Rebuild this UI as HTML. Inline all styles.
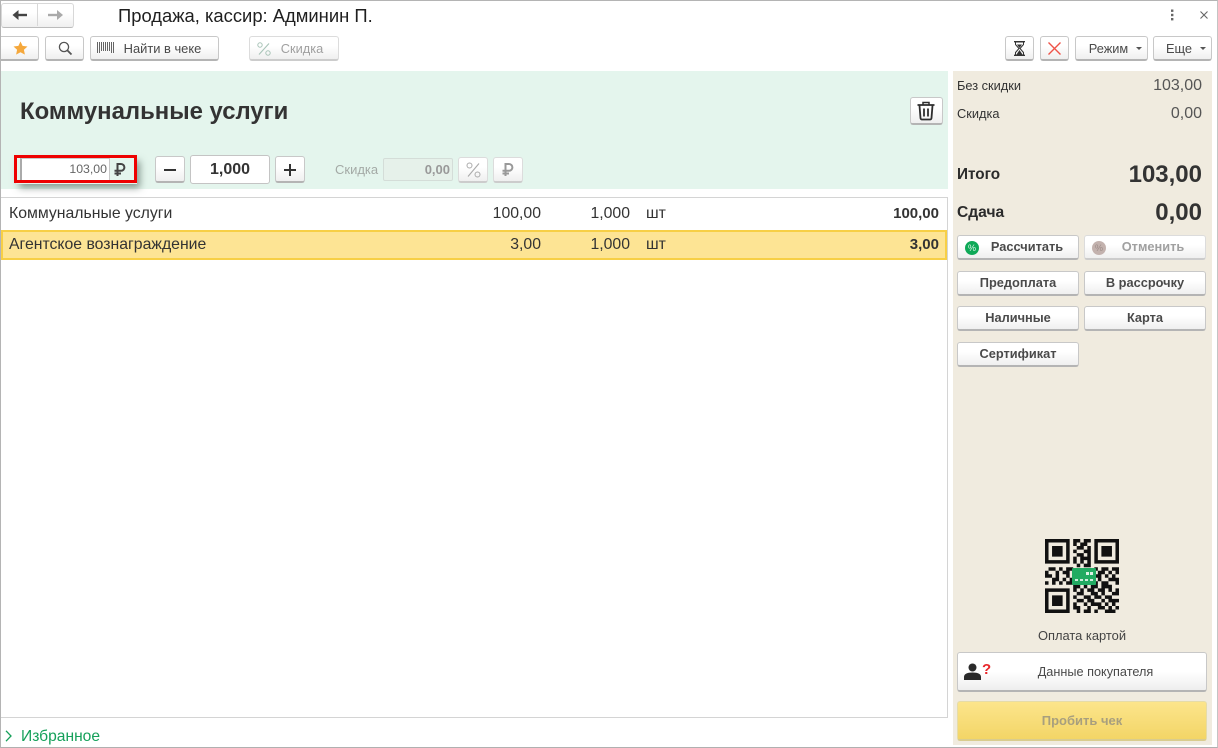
<!DOCTYPE html>
<html lang="ru">
<head>
<meta charset="utf-8">
<title>Продажа</title>
<style>
html,body{margin:0;padding:0;background:#fff}
body{width:1218px;height:748px;position:relative;overflow:hidden;font-family:"Liberation Sans",sans-serif;color:#333}
.a{position:absolute;white-space:nowrap}
.btn{position:absolute;box-sizing:border-box;border:1px solid #c8c8c8;border-bottom:2px solid #b4b4b4;border-radius:3px;background:linear-gradient(#fff 40%,#efefef);text-align:center;font-size:12.8px;color:#4a4a4a;white-space:nowrap}
.dis{border-color:#dcdcdc;border-bottom-color:#cccccc;color:#a0a0a0}
.pay{font-weight:bold;font-size:12.8px;height:25px;line-height:22px;width:122px}
.n{position:absolute;text-align:right;white-space:nowrap}
.t{font-size:15.8px;line-height:18px}
svg{position:absolute;overflow:visible}
</style>
</head>
<body>
<!-- window frame -->
<div class="a" style="left:0;top:0;width:1218px;height:748px;box-sizing:border-box;border:1px solid #b4b4b4;border-right-color:#c4c4c4;border-bottom-color:#b0b0b0;z-index:20;pointer-events:none"></div>

<!-- top nav -->
<div class="btn" style="left:1px;top:3px;width:73px;height:25px;border-bottom-width:1px;border-color:#d8d8d8;border-bottom-color:#bbb"></div>
<div class="a" style="left:37px;top:4px;width:1px;height:22px;background:#d8d8d8"></div>
<svg style="left:12px;top:10px" width="16" height="10" viewBox="0 0 16 10"><path d="M15 5H4" stroke="#444" stroke-width="2.4"/><path d="M6.5 0L0.5 5l6 5z" fill="#444"/></svg>
<svg style="left:48px;top:10px" width="16" height="10" viewBox="0 0 16 10"><path d="M0 5h11" stroke="#aaa" stroke-width="2.4"/><path d="M9 0l6 5-6 5z" fill="#aaa"/></svg>
<div class="a" style="left:118px;top:5px;font-size:18.4px;line-height:22px;color:#1f1f1f">Продажа, кассир: Админин П.</div>

<svg style="left:1170px;top:9px" width="5" height="12" viewBox="0 0 5 12"><g fill="#666"><rect x="1" y="0.5" width="2.4" height="2.4"/><rect x="1" y="4.8" width="2.4" height="2.4"/><rect x="1" y="9" width="2.4" height="2.4"/></g></svg>
<svg style="left:1199px;top:10px" width="10" height="10" viewBox="0 0 10 10"><path d="M1.5 1.5l7 7M8.5 1.5l-7 7" stroke="#666" stroke-width="1.1"/></svg>

<!-- toolbar -->
<div class="btn" style="left:-2px;top:36px;width:41px;height:25px"></div>
<svg style="left:13px;top:41px" width="15" height="14" viewBox="0 0 15 14"><path d="M7.5 0.5l2.1 4.4 4.9.6-3.6 3.3 1 4.8-4.4-2.4-4.4 2.4 1-4.8L0.5 5.5l4.9-.6z" fill="#f5a83c"/></svg>
<div class="btn" style="left:45px;top:36px;width:39px;height:25px"></div>
<svg style="left:58px;top:41px" width="15" height="15" viewBox="0 0 15 15"><circle cx="6" cy="6" r="4.6" fill="none" stroke="#555" stroke-width="1.3"/><path d="M9.5 9.5l4 4" stroke="#555" stroke-width="1.8"/></svg>
<div class="btn" style="left:90px;top:36px;width:129px;height:25px;line-height:23px;padding-left:16px;font-size:12.9px">Найти в чеке</div>
<svg style="left:97px;top:42px" width="17" height="11" viewBox="0 0 17 11"><path d="M.5 0v11M2.5 0v11M4.5 0v9M6.5 0v9M8.5 0v9M10.5 0v9M12.5 0v9M14.5 0v11M16.5 0v11" stroke="#666" stroke-width="1"/></svg>
<div class="btn dis" style="left:249px;top:36px;width:90px;height:25px;line-height:23px;padding-left:16px;font-size:12.8px">Скидка</div>
<svg style="left:257px;top:42px" width="14" height="14" viewBox="0 0 14 14"><path d="M12 1.5L2 12.5" stroke="#a9c4b8" stroke-width="1.1"/><circle cx="3" cy="3" r="2.2" fill="none" stroke="#a9c4b8"/><circle cx="11" cy="11" r="2.2" fill="none" stroke="#a9c4b8"/></svg>

<div class="btn" style="left:1005px;top:36px;width:29px;height:25px"></div>
<svg style="left:1013px;top:41px" width="13" height="15" viewBox="0 0 13 15"><path d="M1 .7h11M1 14.3h11" stroke="#333" stroke-width="1.4"/><path d="M2.5 1v2.5L6 7.5 2.5 11.5V14h8v-2.500L7 7.500l3.500-4V1z" fill="none" stroke="#333" stroke-width="1"/><path d="M3.500 13.500L6.500 9l3 4.500zM4 3.500h5L6.500 7z" fill="#333"/></svg>
<div class="btn" style="left:1040px;top:36px;width:29px;height:25px"></div>
<svg style="left:1047px;top:41px" width="15" height="15" viewBox="0 0 15 15"><path d="M1.500 1.500l12 12M13.500 1.500l-12 12" stroke="#ef5348" stroke-width="1.400"/></svg>
<div class="btn" style="left:1075px;top:36px;width:73px;height:25px;line-height:23px;padding-right:6px;text-align:center">Режим</div>
<div class="a" style="left:1136px;top:47px;border:3px solid transparent;border-top:3px solid #555;border-bottom:0"></div>
<div class="btn" style="left:1153px;top:36px;width:59px;height:25px;line-height:23px;padding-right:7px">Еще</div>
<div class="a" style="left:1200px;top:47px;border:3px solid transparent;border-top:3px solid #555;border-bottom:0"></div>

<!-- green header -->
<div class="a" style="left:1px;top:71px;width:947px;height:118px;background:#e4f5ed"></div>
<div class="a" style="left:20px;top:97px;font-size:23.900px;line-height:29px;font-weight:bold;color:#333">Коммунальные услуги</div>
<div class="btn" style="left:910px;top:97px;width:33px;height:28px"></div>
<svg style="left:916px;top:101px" width="20" height="20" viewBox="0 0 20 20"><path d="M1.500 4h17" stroke="#2e2e2e" stroke-width="1.800"/><path d="M7 3.500V1.500h6v2" fill="none" stroke="#2e2e2e" stroke-width="1.500"/><path d="M3.500 4.500l1 12.500a1.500 1.500 0 0 0 1.500 1.500h8a1.500 1.500 0 0 0 1.500-1.500l1-12.500" fill="none" stroke="#2e2e2e" stroke-width="1.800"/><path d="M8 7.500v8M12 7.500v8" stroke="#2e2e2e" stroke-width="1.800"/></svg>

<!-- price field with red box -->
<div class="a" style="left:16px;top:157px;width:121px;height:27px;box-shadow:3px 4px 7px rgba(60,80,70,.55)"></div>
<div class="a" style="left:20px;top:158px;width:90px;height:24px;box-sizing:border-box;background:#fff;border:1px solid #c8c8c8;border-left:2px solid #aaa"></div>
<div class="a" style="left:110px;top:158px;width:24px;height:24px;background:#e4f5ed"></div>
<div class="n" style="left:20px;width:87px;top:162px;font-size:12.300px;line-height:15px;color:#666">103,00</div>
<svg style="left:114px;top:163px" width="11" height="13" viewBox="0 0 11 13"><path d="M3.500 13V1H7a3.200 3.200 0 0 1 0 6.800H0.500M0.500 10.500H7" fill="none" stroke="#444" stroke-width="2"/></svg>
<div class="a" style="left:14px;top:155px;width:123px;height:28px;box-sizing:border-box;border:3px solid #ee0000"></div>

<!-- qty -->
<div class="btn" style="left:155px;top:156px;width:30px;height:27px"></div>
<div class="a" style="left:164px;top:169px;width:12px;height:2px;background:#333"></div>
<div class="a" style="left:190px;top:155px;width:80px;height:29px;box-sizing:border-box;background:#fff;border:1px solid #c4c4c4;border-radius:3px;text-align:center;font-size:16px;line-height:27px;font-weight:bold;color:#333">1,000</div>
<div class="btn" style="left:275px;top:156px;width:30px;height:27px"></div>
<div class="a" style="left:284px;top:169px;width:12px;height:2px;background:#333"></div>
<div class="a" style="left:289px;top:164px;width:2px;height:12px;background:#333"></div>

<!-- discount -->
<div class="a" style="left:335px;top:162px;font-size:13px;line-height:16px;color:#a4aaa6">Скидка</div>
<div class="a" style="left:383px;top:158px;width:70px;height:23px;box-sizing:border-box;border:1px solid #d4ddd8;border-radius:2px;background:#e6f1ea;text-align:right;padding-right:2px;font-size:13px;line-height:21px;font-weight:bold;color:#999">0,00</div>
<div class="btn dis" style="left:458px;top:157px;width:30px;height:26px"></div>
<svg style="left:466px;top:162px" width="15" height="16" viewBox="0 0 15 16"><path d="M13 1.500L2 14.500" stroke="#aaa" stroke-width="1.100"/><circle cx="3.500" cy="3.500" r="2.500" fill="none" stroke="#aaa"/><circle cx="11.500" cy="12.500" r="2.500" fill="none" stroke="#aaa"/></svg>
<div class="btn dis" style="left:493px;top:157px;width:30px;height:26px"></div>
<svg style="left:502px;top:163px" width="11" height="13" viewBox="0 0 11 13"><path d="M3.500 13V1H7a3.200 3.200 0 0 1 0 6.800H0.500M0.500 10.500H7" fill="none" stroke="#999" stroke-width="2"/></svg>

<!-- table -->
<div class="a" style="left:1px;top:197px;width:947px;height:521px;box-sizing:border-box;border:1px solid #d4d4d4;border-left:0;background:#fff"></div>
<div class="a" style="left:1px;top:230px;width:946px;height:30px;box-sizing:border-box;border:2px solid #f7cf45;background:#fde494"></div>

<div class="a t" style="left:9px;top:205px;color:#333">Коммунальные услуги</div>
<div class="n t" style="left:440px;width:101px;top:205px">100,00</div>
<div class="n t" style="left:560px;width:70px;top:205px">1,000</div>
<div class="a t" style="left:646px;top:205px">шт</div>
<div class="n" style="left:840px;width:99px;top:205px;font-size:15px;line-height:18px;font-weight:bold">100,00</div>

<div class="a t" style="left:9px;top:236px;color:#333">Агентское вознаграждение</div>
<div class="n t" style="left:440px;width:101px;top:236px">3,00</div>
<div class="n t" style="left:560px;width:70px;top:236px">1,000</div>
<div class="a t" style="left:646px;top:236px">шт</div>
<div class="n" style="left:840px;width:99px;top:236px;font-size:15px;line-height:18px;font-weight:bold">3,00</div>

<!-- favorites -->
<svg style="left:5px;top:730px" width="8" height="12" viewBox="0 0 8 12"><path d="M1 .8l5 5.200L1 11.200" fill="none" stroke="#16a05a" stroke-width="1.300"/></svg>
<div class="a" style="left:21px;top:728px;font-size:15.600px;line-height:18px;color:#15a05a">Избранное</div>

<!-- right panel -->
<div class="a" style="left:953px;top:71px;width:259px;height:674px;background:#f0ebdf"></div>
<div class="a" style="left:957px;top:78px;font-size:12.800px;line-height:16px;color:#333">Без скидки</div>
<div class="n" style="left:1100px;width:102px;top:77px;font-size:16px;line-height:18px;color:#555">103,00</div>
<div class="a" style="left:957px;top:106px;font-size:12.800px;line-height:16px;color:#333">Скидка</div>
<div class="n" style="left:1100px;width:102px;top:105px;font-size:16px;line-height:18px;color:#555">0,00</div>
<div class="a" style="left:957px;top:166px;font-size:15.300px;line-height:18px;font-weight:bold;color:#2b2b2b">Итого</div>
<div class="n" style="left:1080px;width:122px;top:161px;font-size:24px;line-height:28px;font-weight:bold;color:#333">103,00</div>
<div class="a" style="left:957px;top:204px;font-size:15.600px;line-height:18px;font-weight:bold;color:#2b2b2b">Сдача</div>
<div class="n" style="left:1080px;width:122px;top:199px;font-size:24px;line-height:28px;font-weight:bold;color:#333">0,00</div>

<div class="btn pay" style="left:957px;top:235px;padding-left:18px">Рассчитать</div>
<div class="a" style="left:965px;top:241px;width:14px;height:14px;border-radius:50%;background:#0fa958;color:#dff5e8;font-size:9px;line-height:14px;text-align:center">%</div>
<div class="btn pay dis" style="left:1084px;top:235px;width:122px;padding-left:16px">Отменить</div>
<div class="a" style="left:1092px;top:241px;width:14px;height:14px;border-radius:50%;background:#c3b2ae;color:#9c8c88;font-size:9px;line-height:14px;text-align:center">%</div>
<div class="btn pay" style="left:957px;top:271px">Предоплата</div>
<div class="btn pay" style="left:1084px;top:271px">В рассрочку</div>
<div class="btn pay" style="left:957px;top:306px">Наличные</div>
<div class="btn pay" style="left:1084px;top:306px">Карта</div>
<div class="btn pay" style="left:957px;top:342px">Сертификат</div>

<!-- QR -->
<svg style="left:1045px;top:539px" width="74" height="74" viewBox="0 0 21 21">
<path fill="#111" fill-rule="evenodd" d="M0 0h7v7H0zM1 1v5h5V1zM2 2h3v3H2zM14 0h7v7h-7zM15 1v5h5V1zM16 2h3v3h-3zM0 14h7v7H0zM1 15v5h5v-5zM2 16h3v3H2z"/>
<path fill="none" stroke="#111" stroke-width="1" d="M8 .5h2M11 .5h2M8 1.500h1M10 1.500h2M9 2.500h2M12 2.500h1M8 3.500h1M11 3.500h2M9 4.500h2M12 4.500h1M8 5.500h1M10 5.500h3M8 6.500h1M10 6.500h1M12 6.500h1M9 7.500h1M11 7.500h2M1 8.500h2M4 8.500h1M6 8.500h2M14 8.500h1M16 8.500h2M19 8.500h2M0 9.500h1M3 9.500h1M5 9.500h2M15 9.500h2M18 9.500h1M20 9.500h1M0 10.500h2M3 10.500h1M6 10.500h1M14 10.500h2M17 10.500h1M19 10.500h1M2 11.500h2M5 11.500h1M7 11.500h1M15 11.500h1M18 11.500h3M0 12.500h1M2 12.500h1M4 12.500h1M6 12.500h2M14 12.500h1M16 12.500h2M20 12.500h1M8 13.500h2M11 13.500h1M13 13.500h2M16 13.500h3M8 14.500h1M10 14.500h1M12 14.500h2M15 14.500h2M18 14.500h1M20 14.500h1M9 15.500h2M13 15.500h2M16 15.500h1M19 15.500h2M8 16.500h1M11 16.500h2M14 16.500h2M17 16.500h2M9 17.500h2M12 17.500h2M16 17.500h1M18 17.500h3M8 18.500h1M11 18.500h1M13 18.500h3M17 18.500h1M19 18.500h1M8 19.500h2M12 19.500h1M15 19.500h2M18 19.500h1M20 19.500h1M9 20.500h1M11 20.500h2M14 20.500h1M17 20.500h3"/>
</svg>
<div class="a" style="left:1072px;top:568px;width:24px;height:17px;background:#22ab62;border-radius:1px"></div>
<div class="a" style="left:1086px;top:572px;width:7px;height:3px;background:repeating-linear-gradient(90deg,#dff3e6 0 3px,transparent 3px 4px)"></div>
<div class="a" style="left:1075px;top:579px;width:19px;height:2px;background:repeating-linear-gradient(90deg,#cfeedd 0 3px,transparent 3px 5px)"></div>

<div class="a" style="left:1038px;top:628px;font-size:12.900px;line-height:16px;color:#444">Оплата картой</div>

<div class="btn" style="left:957px;top:652px;width:250px;height:40px;line-height:38px;font-size:12.700px;padding-left:27px;background:linear-gradient(#fff 50%,#eeeeee)">Данные покупателя</div>
<svg style="left:964px;top:663px" width="18" height="18" viewBox="0 0 18 18"><circle cx="8.500" cy="4.500" r="4" fill="#2a2a2a"/><path d="M0 17v-3c0-3 3-4.500 8.500-4.500S17 11 17 14v3z" fill="#2a2a2a"/></svg>
<div class="a" style="left:982px;top:661px;font-size:15px;line-height:18px;font-weight:bold;color:#e8262a">?</div>

<div class="a" style="left:957px;top:701px;width:250px;height:40px;box-sizing:border-box;border:1px solid #e6dca8;border-bottom:2px solid #d9cc8e;border-radius:3px;background:linear-gradient(#fce58c,#f3d566);text-align:center;font-size:13px;line-height:37px;font-weight:bold;color:#a89f7e">Пробить чек</div>
</body>
</html>
